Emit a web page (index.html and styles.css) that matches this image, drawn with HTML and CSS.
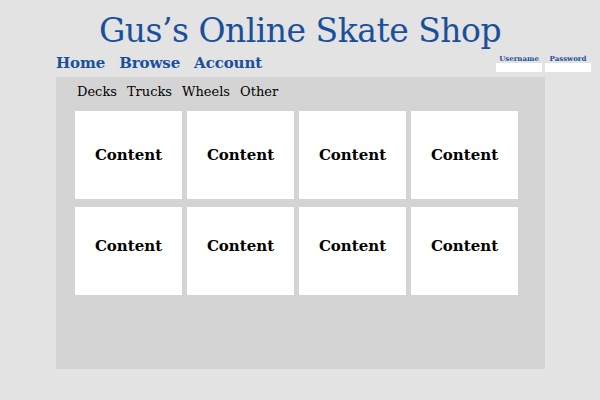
FILE: index.html
```html
<!DOCTYPE html>
<html>
<head>
<meta charset="utf-8">
<link rel="stylesheet" href="styles.css">
</head>
<body>
<div class="page">
  <h1 class="title">Gus’s Online Skate Shop</h1>
  <div class="navrow">
    <nav class="mainnav">
      <a class="navlink">Home</a>
      <a class="navlink">Browse</a>
      <a class="navlink">Account</a>
    </nav>
    <div class="login">
      <div class="field">
        <span class="label">Username</span>
        <span class="input"></span>
      </div>
      <div class="field">
        <span class="label">Password</span>
        <span class="input"></span>
      </div>
    </div>
  </div>
  <main class="panel">
    <div class="subnav">
      <span>Decks</span><span>Trucks</span><span>Wheels</span><span>Other</span>
    </div>
    <div class="grid">
      <div class="card">Content</div>
      <div class="card">Content</div>
      <div class="card">Content</div>
      <div class="card">Content</div>
      <div class="card lower">Content</div>
      <div class="card lower">Content</div>
      <div class="card lower">Content</div>
      <div class="card lower">Content</div>
    </div>
  </main>
</div>
</body>
</html>
```
FILE: styles.css
```css
html, body {
  margin: 0;
  padding: 0;
  background: #e3e3e3;
}
.page {
  width: 600px;
  height: 400px;
  font-family: "DejaVu Serif", serif;
}
.title {
  margin: 0;
  padding-top: 10px;
  height: 42px;
  font-size: 33px;
  font-weight: normal;
  line-height: 42px;
  text-align: center;
  color: #1a4f9c;
  letter-spacing: -0.5px;
}
.navrow {
  display: flex;
  justify-content: space-between;
  align-items: flex-start;
  padding: 0 9px 0 56px;
  height: 25px;
}
.mainnav {
  display: flex;
  gap: 14px;
  padding-top: 1px;
}
.navlink {
  font-size: 15px;
  line-height: 20px;
  color: #1a4f9c;
  font-weight: bold;
  letter-spacing: -0.1px;
}
.login {
  display: flex;
  gap: 3px;
  padding-top: 2px;
}
.field {
  display: flex;
  flex-direction: column;
  align-items: center;
  width: 46px;
}
.label {
  font-size: 7px;
  line-height: 9px;
  font-weight: bold;
  color: #1a4f9c;
}
.input {
  display: block;
  width: 46px;
  height: 9px;
  background: #ffffff;
}
.panel {
  display: block;
  margin-left: 56px;
  width: 489px;
  height: 292px;
  background: #d4d4d4;
}
.subnav {
  display: flex;
  gap: 10px;
  padding: 5px 0 0 21px;
  height: 29px;
  box-sizing: border-box;
  font-size: 13px;
  line-height: 20px;
  color: #000000;
}
.grid {
  display: grid;
  grid-template-columns: repeat(4, 107px);
  grid-auto-rows: 88px;
  column-gap: 5px;
  row-gap: 8px;
  padding: 5px 0 0 19px;
}
.card {
  background: #ffffff;
  display: flex;
  align-items: center;
  justify-content: center;
  font-size: 15px;
  font-weight: bold;
  color: #000000;
}
.card.lower {
  padding-bottom: 10px;
}
```
